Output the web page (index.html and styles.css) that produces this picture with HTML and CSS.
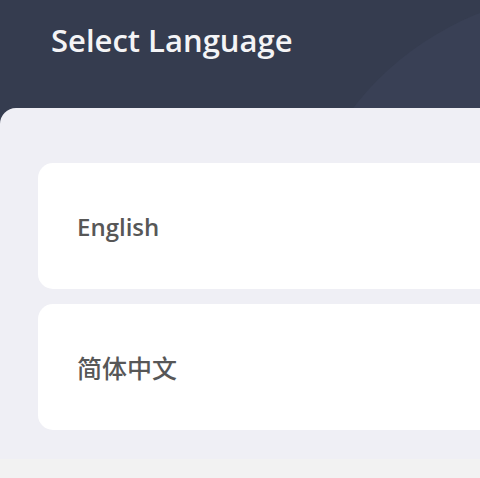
FILE: index.html
```html
<!DOCTYPE html>
<html lang="en">
<head>
  <meta charset="UTF-8" />
  <title>Select Language</title>
  <link rel="stylesheet" href="styles.css">
</head>
<body>

<header class="topbar">
  <div class="wave"></div>
  <h1>Select Language</h1>
</header>

<div class="panel">
  <div class="lang-list">
    <div class="lang-item">English</div>
    <div class="lang-item cjk" lang="zh-CN">简体中文</div>
  </div>
</div>

</body>
</html>
```

FILE: styles.css
```css
body { margin: 0; background: #f2f2f2; font-family: "Open Sans", "Noto Sans CJK SC", sans-serif; }
.topbar { position: relative; overflow: hidden; height: 124px; background: #353c4f; padding: 0 0 0 51px; box-sizing: border-box; }
.topbar h1 { position: relative; margin: 0; padding-top: 19px; font-size: 31px; font-weight: 600; color: #f4f4f6; }
.wave { position: absolute; left: 290px; top: -8px; width: 600px; height: 600px; border-radius: 50%; background: #394055; }
.panel { position: relative; margin-top: -16px; background: #efeff5; border-radius: 16px 0 0 0; padding: 55px 0 29px 38px; }
.lang-list { display: flex; flex-direction: column; gap: 15px; }
.lang-item { height: 126px; background: white; border-radius: 15px 0 0 15px; padding-left: 39px; display: flex; align-items: center; font-size: 24px; font-weight: 600; color: #575757; }
.lang-item.cjk { font-family: "Noto Sans CJK SC", sans-serif; font-size: 25px; font-weight: 500; }
```
